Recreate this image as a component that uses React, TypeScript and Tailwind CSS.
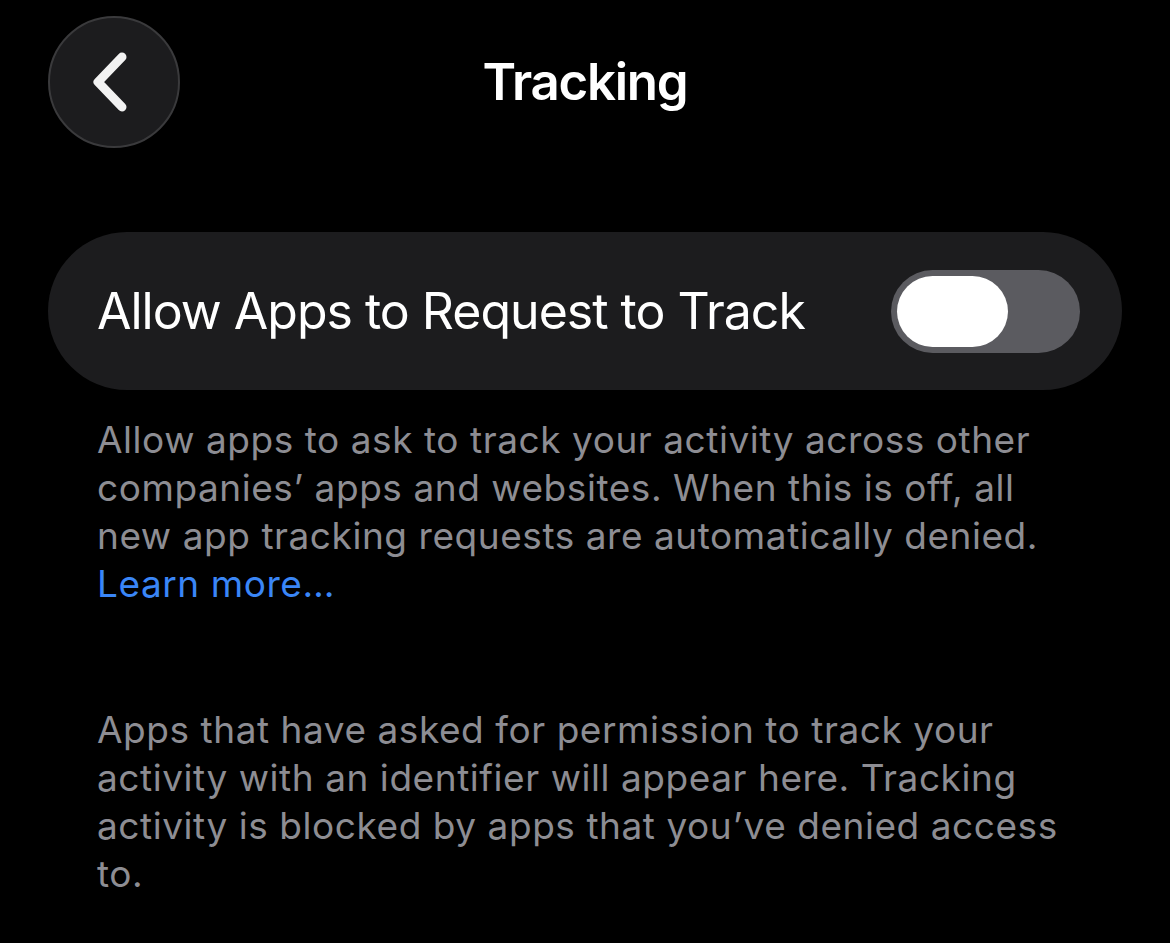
export default function App() {
  return (
    <div
      className="min-h-[943px] w-full bg-black text-white"
      style={{ fontFamily: 'Inter, "Noto Sans", sans-serif' }}
    >
      {/* Nav bar */}
      <div className="relative flex h-[164px] items-center justify-center">
        <button
          type="button"
          className="absolute left-[48px] top-[16px] flex h-[132px] w-[132px] items-center justify-center rounded-full border-2 border-[#3a3a3c] bg-[#1c1c1e] pr-[12px]"
        >
          <svg width="40" height="64" viewBox="0 0 40 64" fill="none">
            <path
              d="M34 7 L10 32 L34 57"
              stroke="#f2f2f2"
              strokeWidth="9"
              strokeLinecap="round"
              strokeLinejoin="round"
            />
          </svg>
        </button>
        <h1 className="text-[51px] font-semibold tracking-[-0.025em]">Tracking</h1>
      </div>

      <div className="px-[48px] pt-[68px]">
        {/* Toggle row */}
        <div className="flex h-[158px] items-center justify-between rounded-full bg-[#1c1c1e] pl-[49px] pr-[42px]">
          <span className="text-[50px] tracking-[-0.02em]">Allow Apps to Request to Track</span>
          <div className="flex h-[83px] w-[189px] items-center rounded-full bg-[#5b5b60] px-[6px]">
            <div className="h-[71px] w-[111px] rounded-full bg-white" />
          </div>
        </div>

        <p className="mt-[26px] w-[1000px] pl-[49px] text-[37px] leading-[48px] tracking-[0.015em] text-[#8d8d93]">
          Allow apps to ask to track your activity across other companies’ apps and websites. When
          this is off, all new app tracking requests are automatically denied.{' '}
          <span className="text-[#3a86f7]">Learn more…</span>
        </p>

        <p className="mt-[98px] w-[1030px] pl-[49px] text-[37px] leading-[48px] tracking-[0.015em] text-[#8d8d93]">
          Apps that have asked for permission to track your activity with an identifier will appear
          here. Tracking activity is blocked by apps that you’ve denied access to.
        </p>
      </div>
    </div>
  );
}
